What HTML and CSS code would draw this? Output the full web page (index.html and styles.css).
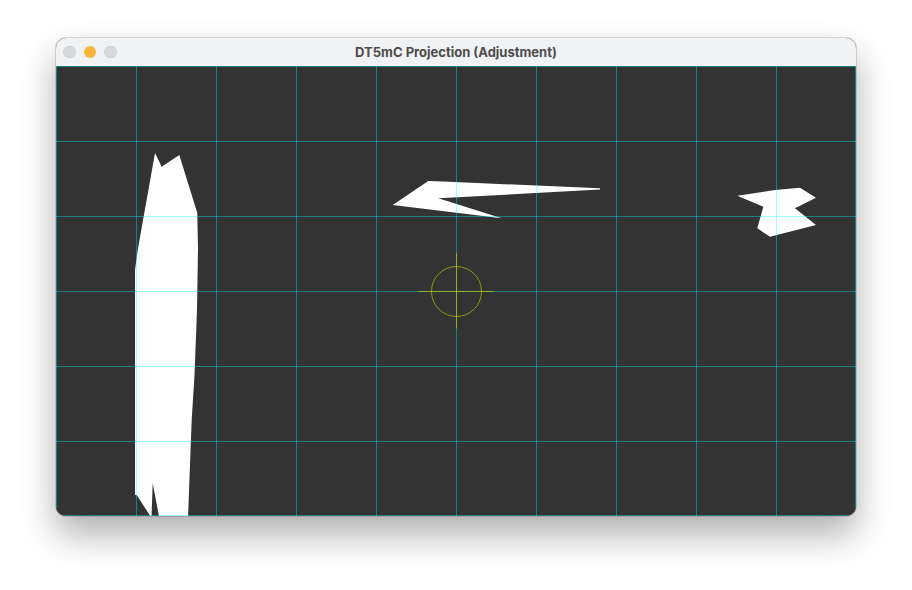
FILE: index.html
```html
<!DOCTYPE html>
<html>
<head>
<meta charset="utf-8">
<title>DT5mC Projection (Adjustment)</title>
<link rel="stylesheet" href="styles.css">
</head>
<body>
<div class="window">
  <div class="titlebar">
    <div class="lights">
      <span class="light grey"></span>
      <span class="light orange"></span>
      <span class="light grey"></span>
    </div>
    <div class="title">DT5mC Projection (Adjustment)</div>
  </div>
  <svg class="canvas" width="800" height="450" viewBox="0 0 800 450" xmlns="http://www.w3.org/2000/svg">
    <rect x="0" y="0" width="800" height="450" fill="#333333"/>
    <g fill="#ffffff">
      <polygon points="99,87 105.7,100.7 123.3,89 141.3,147 142,184 141,244 138.5,309 135.7,354 132,452 103.3,452 96.7,417.3 95.5,452 80.7,429 79,429 79,204 81.7,184"/>
      <polygon points="372.3,115 387,115.6 544,122.2 544,123.6 382.3,132.3 445.7,152.3 336.7,139"/>
      <polygon points="681.3,129.7 719,124 744,121.7 760,131.7 739,142.3 760,159 714,170.7 701.3,162.3 707.3,140.7"/>
    </g>
    <path fill="none" stroke="#00ffff" stroke-opacity="0.38" stroke-width="1"
      d="M0.5 0V450 M80.5 0V450 M160.5 0V450 M240.5 0V450 M320.5 0V450 M400.5 0V450 M480.5 0V450 M560.5 0V450 M640.5 0V450 M720.5 0V450 M799.5 0V450 M0 0.5H800 M0 75.5H800 M0 150.5H800 M0 225.5H800 M0 300.5H800 M0 375.5H800 M0 449.5H800"/>
    <g fill="none" stroke="#d2d200" stroke-opacity="0.62" stroke-width="1">
      <path d="M362.5 225.5H437.5 M400.5 187.5V262.5"/>
      <circle cx="400.5" cy="225.5" r="25"/>
    </g>
  </svg>
</div>
</body>
</html>
```
FILE: styles.css
```css
html, body {
  margin: 0;
  padding: 0;
  background: #ffffff;
}
body {
  display: flex;
  justify-content: center;
  align-items: flex-start;
  box-sizing: border-box;
  min-height: 590px;
  padding-top: 38px;
  font-family: Inter, "Noto Sans", "Liberation Sans", sans-serif;
}
.window {
  width: 800px;
  border-radius: 10px;
  overflow: hidden;
  display: flex;
  flex-direction: column;
  box-shadow: 0 0 0 1px rgba(0, 0, 0, 0.14), 0 18px 36px rgba(0, 0, 0, 0.32);
  background: #333333;
}
.titlebar {
  height: 28px;
  background: #f0f2f3;
  display: flex;
  align-items: center;
  position: relative;
}
.lights {
  display: flex;
  gap: 8px;
  padding-left: 7px;
}
.light {
  width: 12.5px;
  height: 12.5px;
  border-radius: 50%;
  display: block;
}
.light.grey {
  background: #d6d8da;
  box-shadow: inset 0 0 0 0.5px rgba(0, 0, 0, 0.08);
}
.light.orange {
  background: #f8b43a;
}
.title {
  position: absolute;
  left: 0;
  right: 0;
  top: 0;
  text-align: center;
  font-size: 13px;
  font-weight: 700;
  color: #4c4c4c;
  line-height: 28px;
}
.canvas {
  display: block;
}
```
